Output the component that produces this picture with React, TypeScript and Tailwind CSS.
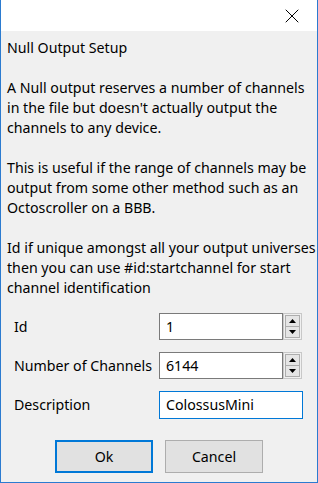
import { X } from "lucide-react";

const lines = [
	"Null Output Setup",
	"",
	"A Null output reserves a number of channels",
	"in the file but doesn't actually output the",
	"channels to any device.",
	"",
	"This is useful if the range of channels may be",
	"output from some other method such as an",
	"Octoscroller on a BBB.",
	"",
	"Id if unique amongst all your output universes",
	"then you can use #id:startchannel for start",
	"channel identification",
];

function SpinButtons() {
	return (
		<div className="flex h-[27px] w-[19px] flex-col border border-[#c8c8c8] bg-[#f0f0f0] p-px">
			<div className="flex flex-1 items-center justify-center border border-[#adadad] bg-[#e5e5e5]">
				<svg width="7" height="4" viewBox="0 0 7 4">
					<path d="M0 4 L3.5 0 L7 4 Z" fill="#000" />
				</svg>
			</div>
			<div className="flex flex-1 items-center justify-center border border-t-0 border-[#adadad] bg-[#e5e5e5]">
				<svg width="7" height="4" viewBox="0 0 7 4">
					<path d="M0 0 L3.5 4 L7 0 Z" fill="#000" />
				</svg>
			</div>
		</div>
	);
}

export default function App() {
	return (
		<div className="flex h-[483px] w-[318px] flex-col border border-t-0 border-[#2b7bd0] bg-[#f0f0f0] font-['Noto_Sans',sans-serif] text-[14.2px] text-black">
			<div className="flex h-[31px] shrink-0 items-center justify-end bg-white pr-[13px]">
				<X size={24} strokeWidth={1} />
			</div>

			<div className="pl-[6px] pt-[7px] leading-[20px]">
				{lines.map((line, i) => (
					<div className="h-[20px] whitespace-nowrap" key={i}>
						{line}
					</div>
				))}
			</div>

			<div className="mt-[15px] grid grid-cols-[145px_auto] items-center gap-y-[12px] pl-[13px]">
				<span>Id</span>
				<div className="flex">
					<div className="flex h-[27px] w-[124px] items-center border border-[#7a7a7a] bg-white px-[6px]">1</div>
					<SpinButtons />
				</div>

				<span>Number of Channels</span>
				<div className="flex">
					<div className="flex h-[27px] w-[124px] items-center border border-[#7a7a7a] bg-white px-[6px]">6144</div>
					<SpinButtons />
				</div>

				<span>Description</span>
				<div className="flex h-[28px] w-[144px] items-center border border-[#0078d7] bg-white px-[6px]">
					ColossusMini
				</div>
			</div>

			<div className="mt-[21px] flex gap-[12px] pl-[54px]">
				<button className="h-[33px] w-[98px] border-2 border-[#0078d7] bg-[#e1e1e1]">Ok</button>
				<button className="h-[33px] w-[98px] border border-[#adadad] bg-[#e1e1e1]">Cancel</button>
			</div>
		</div>
	);
}
